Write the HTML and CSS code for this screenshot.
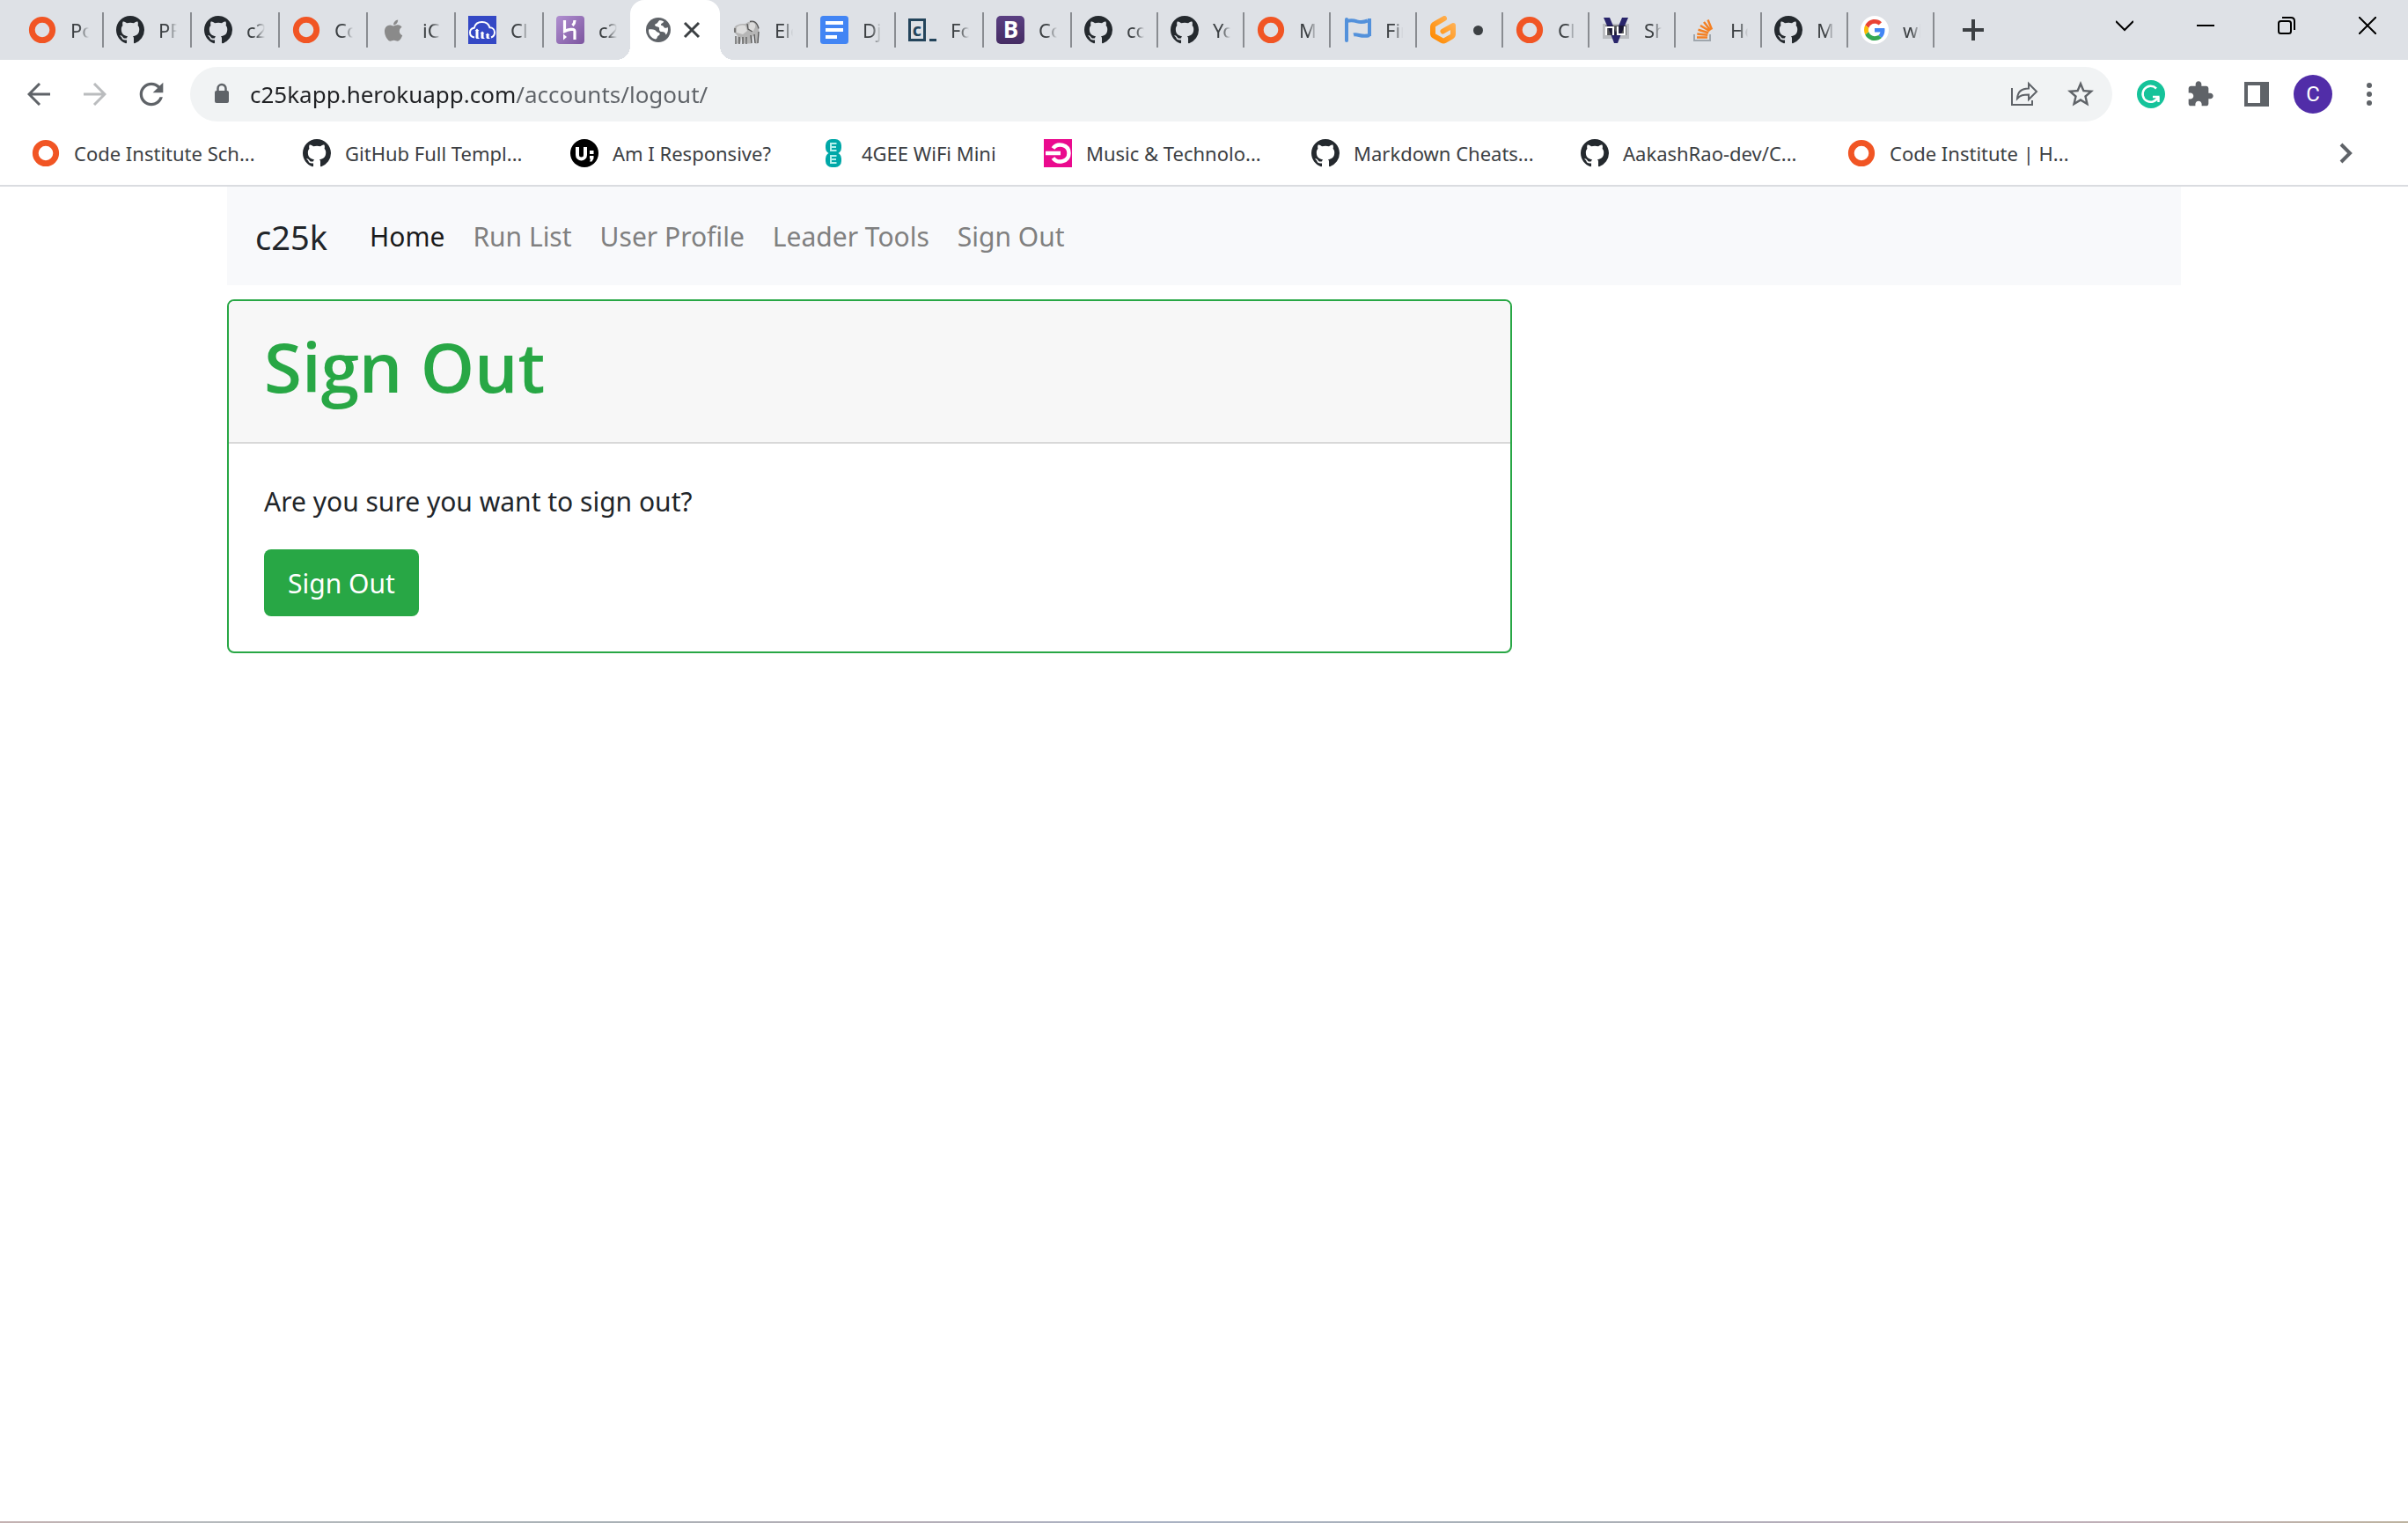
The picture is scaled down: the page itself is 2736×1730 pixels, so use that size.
FILE: index.html
```
<!DOCTYPE html>
<html lang="en">
<head>
<meta charset="utf-8">
<title>c25k</title>
<link rel="stylesheet" href="styles.css">
</head>
<body>
<svg class="sprite" aria-hidden="true">
  <defs>
    <linearGradient id="heroku-fill" x1="0" y1="0" x2="1" y2="1"><stop offset="0" stop-color="#b08fd0"/><stop offset="1" stop-color="#7c559f"/></linearGradient>
    <linearGradient id="gitpod-fill" x1="1" y1="0" x2="0" y2="1"><stop offset="0" stop-color="#ffb45b"/><stop offset="1" stop-color="#ff8a00"/></linearGradient>
    <linearGradient id="bootstrap-fill" x1="0" y1="0" x2="0" y2="1"><stop offset="0" stop-color="#5a3f82"/><stop offset="1" stop-color="#452c63"/></linearGradient>
    <symbol id="ring" viewBox="0 0 32 32"><circle cx="16" cy="16" r="11.700" fill="none" stroke="#f15524" stroke-width="6.800"/></symbol>
    <symbol id="github" viewBox="0 0 16 16"><path fill="#24292e" d="M8 0C3.58 0 0 3.58 0 8c0 3.54 2.29 6.53 5.47 7.59.4.07.55-.17.55-.38 0-.19-.01-.82-.01-1.49-2.01.37-2.53-.49-2.69-.94-.09-.23-.48-.94-.82-1.13-.28-.15-.68-.52-.01-.53.63-.01 1.08.58 1.23.82.72 1.21 1.87.87 2.33.66.07-.52.28-.87.51-1.07-1.78-.2-3.64-.89-3.64-3.95 0-.87.31-1.59.82-2.15-.08-.2-.36-1.02.08-2.12 0 0 .67-.21 2.2.82.64-.18 1.32-.27 2-.27s1.36.09 2 .27c1.53-1.04 2.2-.82 2.2-.82.44 1.1.16 1.92.08 2.12.51.56.82 1.27.82 2.15 0 3.07-1.87 3.75-3.65 3.95.29.25.54.73.54 1.48 0 1.07-.01 1.93-.01 2.2 0 .21.15.46.55.38A8.01 8.01 0 0 0 16 8c0-4.42-3.58-8-8-8z"/></symbol>
    <symbol id="apple" viewBox="-64 -16 512 512"><path fill="#8a8a8a" transform="translate(12 30) scale(.86)" d="M318.7 268.7c-.2-36.7 16.4-64.4 50-84.8-18.8-26.9-47.2-41.7-84.7-44.6-35.5-2.8-74.3 20.7-88.5 20.7-15 0-49.4-19.7-76.4-19.7C63.3 141.2 4 184.8 4 273.5q0 39.3 14.4 81.2c12.8 36.7 59 126.7 107.2 125.2 25.2-.6 43-17.9 75.8-17.9 31.8 0 48.3 17.9 76.4 17.9 48.6-.7 90.4-82.5 102.6-119.3-65.2-30.7-61.7-90-61.7-91.9zm-56.6-164.2c27.3-32.4 24.8-61.9 24-72.5-24.1 1.4-52 16.4-67.9 34.9-17.5 19.8-27.8 44.3-25.6 71.9 26.1 2 49.900-11.400 69.500-34.300z"/></symbol>
    <symbol id="cloud" viewBox="0 0 32 32"><path fill="#3448c5" d="M0 0h32v32H0z"/><path d="M7 24.500C3.500 24 2 21.500 2 19c0-3 2-5 4.800-5.300C7.800 9.300 11.500 7 15.700 7c4 0 7.500 2.300 8.700 6.200 3.300 0 5.600 2.500 5.600 5.600 0 2.700-1.500 4.900-4 5.700" fill="none" stroke="#fff" stroke-width="2"/><path fill="#fff" d="M7.500 17 10 14.500l2.500 2.500h-1v7.500L13 26H9.500L8.500 25v-8zM13.500 20l2.500-2.500 2.500 2.500h-1v4.500L19 26h-3.500l-1-1v-5zM19.500 22l2.500-2.500 2.500 2.500h-1v2.500L25 26h-3.500l-1-1v-3z"/></symbol>
    <symbol id="heroku" viewBox="0 0 32 32"><rect width="32" height="32" rx="4" fill="url(#heroku-fill)"/><path d="M9.500 5v12.500c3-1.500 11.500-4 11.500 0V27M21 5c0 2.500-1 4.500-2.500 6" fill="none" stroke="#fff" stroke-width="3.200"/><path fill="#fff" d="m8 20.500 4 3.500-4 3.500z"/></symbol>
    <symbol id="globe" viewBox="0 0 32 32"><circle cx="16" cy="16" r="14" fill="#5f6368"/><path fill="#fff" d="M5 15.500c2.500-.6 5-.4 7 .4 1.500.8 1.500 2 3 2.500 2 .5 3 1.300 2.600 2.800-.5 1.300-2.600 1.400-2.800 2.800-.1 1-.6 2-1.800 2.600C8 25.600 4.500 21 5 15.500zM17.500 5c2 .2 3.500.8 4.800 1.800-.8 1.400-2.600 1.500-3.300 2.600-.5 1.200.7 1.600 1.800 1.800 1.600.3 1 1.800 2.200 2.400 1.300.6 3 0 3.800-.6.7 3-.2 6.500-2 8.600-.8-.6-.6-2.200-1.800-2.900-1.700-.8-4.200.2-5.500-1.600-1-1.500.2-3.100-1-4.100-1.200-1-3.500-.4-4.300-1.900-.7-1.800 1.800-2.100 2.800-3.100.9-.9.900-2.300 2.500-3z"/></symbol>
    <symbol id="elephant" viewBox="0 0 32 32"><path fill="#b5b5b5" d="M2 14c1-3 5-5 12-5 2 0 3-2 6-2.500 5-.8 9 2.500 10 8 .5 4 .5 11-1 17h-3l-1-9-2 1-1 8h-5l-1-8-1 8h-3l-1-8-2 8H5l1-9c-2-2-5-4-4-8.500z"/><path fill="#dcdcdc" d="M5 13c3-3 7-3 10-2l2 6-5 4-7-2zM20 8c5-1 7 1 6 5l-3 6-5-4z"/><path fill="none" stroke="#555" stroke-width="1.300" d="M3 14v5M4 23v9M8 24v8M12 24v8M16 24v8M21 22l1 9M25 21l1 10M30 18l-1 13M17 9l1 6 5 3M20 6.500c4-1 8 0 10 8"/></symbol>
    <symbol id="docs" viewBox="0 0 32 32"><rect width="32" height="32" rx="3.500" fill="#4285f4"/><path fill="#fff" d="M6 6h20v4H6zM6 14h20v4H6zM6 22h13v4H6z"/></symbol>
    <symbol id="crispy" viewBox="0 0 32 32"><path fill="none" stroke="#23445b" stroke-width="3" d="M1.500 4.500h17v23h-17z"/><path fill="#23445b" d="M24 26h8v3h-8z"/><text x="10" y="23" text-anchor="middle" class="glyph glyph-bold" font-size="20" fill="#23445b">c</text></symbol>
    <symbol id="bootstrap" viewBox="0 0 32 32"><rect width="32" height="32" rx="5" fill="url(#bootstrap-fill)"/><text x="16.500" y="25" text-anchor="middle" class="glyph glyph-bold" font-size="26" fill="#fff">B</text></symbol>
    <symbol id="flag" viewBox="0 0 32 32"><path fill="none" stroke="#5391db" stroke-width="4" stroke-linecap="round" d="M4 4v24"/><path fill="none" stroke="#5391db" stroke-width="4" d="M4 6c5-1.500 8-1 12 .3 4 1.200 7 1 12-.8M30 3v20M12 21.500c5-1.500 9 3.500 18 .5"/></symbol>
    <symbol id="gitpod" viewBox="0 0 32 32"><path fill="none" stroke="url(#gitpod-fill)" stroke-width="6" stroke-linecap="round" stroke-linejoin="round" d="M17 3 6 9.300C4.700 10 4 11 4 12.500v7.700c0 1.300.6 2.100 1.700 2.800l8.500 4.900c1.300.7 2.500.7 3.700 0l7.400-4.300c1.100-.7 1.700-1.500 1.700-2.800V11l-11.500 6.500"/></symbol>
    <symbol id="nu" viewBox="0 0 32 32"><path fill="#777" opacity=".35" d="M1 9h30v17H1z"/><path fill="#29256b" d="M2 2h7l7 17 7-17h7l-9 21-3 8h-4l-3-8z"/><path fill="#111" opacity=".6" d="M4 11h24v11H4z"/><path fill="none" stroke="#fff" stroke-width="2.200" d="M5 22v-9h8v9M18 12v9h8v-9"/></symbol>
    <symbol id="stack" viewBox="0 0 32 32"><path fill="none" stroke="#9fa6ad" stroke-width="2" d="M7 21v7h18v-7"/><path fill="none" stroke="#f48024" stroke-width="2.500" d="M10 24.500h12M10.300 20.500l12 1.300M11.500 15.800l11.600 3.400M14 11l10.500 6.300M18 7l7.500 9.500M22.500 4.500l4.500 11"/></symbol>
    <symbol id="google" viewBox="-8 -8 64 64"><circle cx="24" cy="24" r="32" fill="#fff"/><path fill="#4285f4" d="M46.980 24.550c0-1.570-.15-3.090-.38-4.550H24v9.020h12.940c-.58 2.960-2.260 5.480-4.780 7.180l7.730 6c4.510-4.180 7.090-10.360 7.090-17.650z"/><path fill="#ea4335" d="M24 9.500c3.540 0 6.710 1.220 9.210 3.600l6.850-6.850C35.900 2.380 30.470 0 24 0 14.620 0 6.510 5.380 2.560 13.220l7.980 6.190C12.430 13.720 17.740 9.500 24 9.500z"/><path fill="#fbbc05" d="M10.530 28.590c-.48-1.450-.76-2.990-.76-4.590s.27-3.140.76-4.590l-7.980-6.190C.92 16.460 0 20.120 0 24c0 3.880.92 7.540 2.560 10.780l7.970-6.190z"/><path fill="#34a853" d="M24 48c6.480 0 11.930-2.130 15.890-5.810l-7.730-6c-2.150 1.450-4.920 2.300-8.160 2.300-6.260 0-11.570-4.220-13.470-9.910l-7.980 6.190C6.510 42.620 14.620 48 24 48z"/></symbol>
    <symbol id="responsive" viewBox="0 0 32 32"><circle cx="16" cy="16" r="16"/><path fill="none" stroke="#fff" stroke-width="4" d="M8 9v9c0 6 9 6 9 0V9"/><path fill="#fff" d="M22 13h4.500v4H22zM22 19h4.500v3l-2 3.500H22l1-3h-1z"/></symbol>
    <symbol id="ee" viewBox="0 0 32 32"><rect x="7" y="0" width="18" height="17" rx="7" fill="#00a8a8"/><rect x="7" y="15" width="18" height="17" rx="7" fill="#00a8a8"/><path fill="none" stroke="#b5f0ec" stroke-width="2" d="M19.500 5H13v8h6.500M13 9h6M19.500 19H13v8h6.500M13 23h6"/></symbol>
    <symbol id="music" viewBox="0 0 32 32"><path fill="#ea0a8e" d="M0 0h32v32H0z"/><path fill="none" stroke="#fff" stroke-width="4.500" d="M10.500 10.500c5-7 18-4.500 18 5.500s-13 12.500-18 5.500M2 16h17"/></symbol>
  </defs>
</svg>

<header class="browser">
  <div class="tab-strip">
    <nav class="tabs" aria-label="Open tabs">
      <button class="tab"><svg class="icon"><use href="#ring"/></svg><span class="tab-title">Po</span></button>
      <button class="tab"><svg class="icon"><use href="#github"/></svg><span class="tab-title">PF</span></button>
      <button class="tab"><svg class="icon"><use href="#github"/></svg><span class="tab-title">c2</span></button>
      <button class="tab"><svg class="icon"><use href="#ring"/></svg><span class="tab-title">Co</span></button>
      <button class="tab"><svg class="icon"><use href="#apple"/></svg><span class="tab-title">iC</span></button>
      <button class="tab"><svg class="icon"><use href="#cloud"/></svg><span class="tab-title">Cl</span></button>
      <button class="tab tab-plain"><svg class="icon"><use href="#heroku"/></svg><span class="tab-title">c2</span></button>
      <div class="tab tab-plain tab-active"><svg class="icon"><use href="#globe"/></svg><button class="tab-close" aria-label="Close tab"><svg width="20" height="20" viewBox="0 0 20 20"><path d="m2 2 16 16M18 2 2 18" fill="none" stroke="#3c4043" stroke-width="3"/></svg></button></div>
      <button class="tab"><svg class="icon"><use href="#elephant"/></svg><span class="tab-title">Ele</span></button>
      <button class="tab"><svg class="icon"><use href="#docs"/></svg><span class="tab-title">Dj</span></button>
      <button class="tab"><svg class="icon"><use href="#crispy"/></svg><span class="tab-title">Fo</span></button>
      <button class="tab"><svg class="icon"><use href="#bootstrap"/></svg><span class="tab-title">Co</span></button>
      <button class="tab tab-narrow"><svg class="icon"><use href="#github"/></svg><span class="tab-title">co</span></button>
      <button class="tab tab-narrow"><svg class="icon"><use href="#github"/></svg><span class="tab-title">Yo</span></button>
      <button class="tab tab-narrow"><svg class="icon"><use href="#ring"/></svg><span class="tab-title">M</span></button>
      <button class="tab tab-narrow"><svg class="icon"><use href="#flag"/></svg><span class="tab-title">Fin</span></button>
      <button class="tab tab-narrow" aria-label="Gitpod"><svg class="icon"><use href="#gitpod"/></svg><span class="tab-dot"></span></button>
      <button class="tab tab-narrow"><svg class="icon"><use href="#ring"/></svg><span class="tab-title">Cl</span></button>
      <button class="tab tab-narrow"><svg class="icon"><use href="#nu"/></svg><span class="tab-title">Sh</span></button>
      <button class="tab tab-narrow"><svg class="icon"><use href="#stack"/></svg><span class="tab-title">Ho</span></button>
      <button class="tab tab-narrow"><svg class="icon"><use href="#github"/></svg><span class="tab-title">M</span></button>
      <button class="tab tab-narrow"><svg class="icon"><use href="#google"/></svg><span class="tab-title">wh</span></button>
    </nav>
    <button class="new-tab" aria-label="New tab"><svg width="24" height="24" viewBox="0 0 24 24"><path d="M12 0v24M0 12h24" stroke="#3c4043" stroke-width="4"/></svg></button>
    <div class="window-controls">
      <button aria-label="Search tabs"><svg width="20" height="20" viewBox="0 0 20 20"><path d="m0 5 10 10L20 5" fill="none" stroke="#000" stroke-width="2"/></svg></button>
      <button aria-label="Minimise"><svg width="20" height="20" viewBox="0 0 20 20"><path d="M0 10h20" stroke="#000" stroke-width="2"/></svg></button>
      <button aria-label="Restore"><svg width="20" height="20" viewBox="0 0 20 20"><rect x="1" y="5" width="14" height="14" rx="2.500" fill="none" stroke="#000" stroke-width="2"/><path d="M5 1h10c2.500 0 4 1.500 4 4v10" fill="none" stroke="#000" stroke-width="2"/></svg></button>
      <button aria-label="Close"><svg width="20" height="20" viewBox="0 0 20 20"><path d="m0 0 20 20M20 0 0 20" stroke="#000" stroke-width="2"/></svg></button>
    </div>
  </div>

  <div class="toolbar">
    <button class="tool tool-wide" aria-label="Back"><svg width="26" height="26" viewBox="0 0 26 26"><path d="M26 13H3M14 1 2 13l12 12" fill="none" stroke="#5f6368" stroke-width="3"/></svg></button>
    <button class="tool tool-wide" aria-label="Forward"><svg width="26" height="26" viewBox="0 0 26 26"><path d="M0 13h23M12 1l12 12-12 12" fill="none" stroke="#babcbe" stroke-width="3"/></svg></button>
    <button class="tool tool-wide" aria-label="Reload"><svg width="40" height="40" viewBox="0 0 24 24"><path fill="#5f6368" d="M17.650 6.350C16.200 4.900 14.210 4 12 4c-4.420 0-7.990 3.580-7.990 8s3.570 8 7.990 8c3.730 0 6.840-2.550 7.730-6h-2.080c-.82 2.330-3.040 4-5.650 4-3.310 0-6-2.690-6-6s2.690-6 6-6c1.660 0 3.140.69 4.220 1.780L13 11h7V4l-2.350 2.350z"/></svg></button>
    <div class="omnibox">
      <svg class="icon" viewBox="0 0 32 32"><path fill="none" stroke="#5f6368" stroke-width="2.500" d="M11.500 13V9.500a4.500 4.500 0 0 1 9 0V13"/><rect x="8" y="12" width="16" height="14" rx="2" fill="#5f6368"/></svg>
      <input class="address" type="text" aria-label="Address" value="c25kapp.herokuapp.com/accounts/logout/">
      <button class="tool tool-wide" aria-label="Share"><svg width="32" height="32" viewBox="0 0 32 32" fill="none" stroke="#5f6368" stroke-width="2"><path d="M2 9v19h23v-5"/><path d="M8 21c.5-8 5-11.500 13-11.500V4l9 9-9 9v-5.500c-6 0-9.500.5-13 4.500z"/></svg></button>
      <button class="tool tool-wide" aria-label="Bookmark this tab"><svg width="36" height="36" viewBox="0 0 24 24"><path fill="#5f6368" d="M22 9.240l-7.190-.62L12 2 9.190 8.630 2 9.240l5.460 4.730L5.820 21 12 17.270 18.180 21l-1.630-7.030L22 9.240zM12 15.400l-3.760 2.270 1-4.280-3.320-2.880 4.380-.38L12 6.100l1.710 4.040 4.380.38-3.320 2.880 1 4.280L12 15.400z"/></svg></button>
    </div>
    <div class="extensions">
      <button class="tool" aria-label="Grammarly"><svg class="icon" viewBox="0 0 32 32"><circle cx="16" cy="16" r="16" fill="#15c39a"/><path d="M22 9.500A9 9 0 1 0 24 19h-6M24.500 25v-6" fill="none" stroke="#fff" stroke-width="2.500"/></svg></button>
      <button class="tool" aria-label="Extensions"><svg width="32" height="32" viewBox="0 0 24 24"><path fill="#5f6368" d="M20.500 11H19V7c0-1.100-.9-2-2-2h-4V3.500C13 2.120 11.880 1 10.500 1S8 2.120 8 3.500V5H4c-1.100 0-1.990.9-1.990 2v3.800H3.500c1.490 0 2.700 1.210 2.700 2.700s-1.210 2.700-2.700 2.700H2V20c0 1.100.9 2 2 2h3.800v-1.500c0-1.490 1.210-2.700 2.700-2.700 1.490 0 2.700 1.210 2.700 2.700V22H17c1.100 0 2-.9 2-2v-4h1.500c1.380 0 2.500-1.120 2.500-2.500S21.880 11 20.500 11z"/></svg></button>
      <button class="tool tool-panel" aria-label="Side panel"><svg width="28" height="28" viewBox="0 0 28 28"><path fill="#5f6368" fill-rule="evenodd" d="M0 0h28v28H0zM4 4v20h14V4z"/></svg></button>
      <button class="tool" aria-label="Profile"><span class="avatar">C</span></button>
      <button class="tool tool-panel" aria-label="Menu"><svg width="8" height="28" viewBox="0 0 8 28" fill="#5f6368"><circle cx="4" cy="4" r="3"/><circle cx="4" cy="14" r="3"/><circle cx="4" cy="24" r="3"/></svg></button>
    </div>
  </div>

  <nav class="bookmarks" aria-label="Bookmarks">
    <a href="#"><svg class="icon"><use href="#ring"/></svg>Code Institute Sch...</a>
    <a href="#"><svg class="icon"><use href="#github"/></svg>GitHub Full Templ...</a>
    <a href="#"><svg class="icon"><use href="#responsive"/></svg>Am I Responsive?</a>
    <a href="#"><svg class="icon"><use href="#ee"/></svg>4GEE WiFi Mini</a>
    <a href="#"><svg class="icon"><use href="#music"/></svg>Music &amp; Technolo...</a>
    <a href="#"><svg class="icon"><use href="#github"/></svg>Markdown Cheats...</a>
    <a href="#"><svg class="icon"><use href="#github"/></svg>AakashRao-dev/C...</a>
    <a href="#"><svg class="icon"><use href="#ring"/></svg>Code Institute | H...</a>
    <button class="more" aria-label="More bookmarks"><svg width="16" height="24" viewBox="0 0 16 24"><path d="m2 2 10 10L2 22" fill="none" stroke="#5f6368" stroke-width="4"/></svg></button>
  </nav>
</header>

<main class="container">
  <nav class="navbar">
    <a class="brand" href="#">c25k</a>
    <a class="nav-link nav-current" href="#">Home</a>
    <a class="nav-link" href="#">Run List</a>
    <a class="nav-link" href="#">User Profile</a>
    <a class="nav-link" href="#">Leader Tools</a>
    <a class="nav-link" href="#">Sign Out</a>
  </nav>
  <section class="card">
    <h1 class="card-header">Sign Out</h1>
    <form class="card-body">
      <p>Are you sure you want to sign out?</p>
      <button class="submit" type="button">Sign Out</button>
    </form>
  </section>
</main>
<footer class="screen-edge"></footer>
</body>
</html>
```
FILE: styles.css
```
* {
  box-sizing: border-box;
}

body {
  display: flex;
  flex-direction: column;
  min-height: 100vh;
  margin: 0;
  background: #fff;
  color: #212529;
  font-family: "Noto Sans", "Open Sans", sans-serif;
  font-size: 30px;
  line-height: 48px;
}

button {
  padding: 0;
  border: 0;
  background: none;
  color: inherit;
  font: inherit;
}

a {
  color: inherit;
  text-decoration: none;
}

svg {
  display: block;
  flex: none;
}

.sprite {
  position: absolute;
  width: 0;
  height: 0;
}

.icon {
  width: 32px;
  height: 32px;
}

.glyph {
  font-family: "Open Sans", sans-serif;
}

.glyph-bold {
  font-weight: 700;
}

/* Browser frame */

.browser {
  border-bottom: 2px solid #dadce0;
  color: #3c4043;
  font-size: 22px;
  line-height: 32px;
}

.tab-strip {
  display: flex;
  height: 68px;
  padding-left: 18px;
  background: #dee1e6;
}

.tabs {
  display: flex;
}

.tab {
  display: flex;
  align-items: center;
  width: 100px;
  padding-left: 14px;
  gap: 16px;
}

.tab-narrow {
  width: 98px;
}

.tab::after {
  content: "";
  width: 2px;
  height: 40px;
  margin-left: auto;
  background: #898c91;
}

.tab-title {
  width: 21px;
  overflow: hidden;
  white-space: nowrap;
  text-align: left;
  -webkit-mask-image: linear-gradient(90deg, #000 10px, transparent);
  mask-image: linear-gradient(90deg, #000 10px, transparent);
}

.tab-narrow,
.tab:not(.tab-active) {
  gap: 16px;
}

.tab::after {
  flex: none;
}

.tab:not(.tab-active)::after {
  margin-left: -2px;
}

.tab-title,
.tab-dot {
  margin-right: auto;
}

.tab-dot {
  width: 11px;
  height: 11px;
  margin-left: 2px;
  border-radius: 50%;
  background: #3c4043;
}

.tab-plain::after {
  display: none;
}

.tab-active {
  position: relative;
  width: 102px;
  margin-left: -2px;
  padding-left: 16px;
  gap: 12px;
  border-radius: 16px 16px 0 0;
  background: #fff;
}

.tab-active::before,
.tab-active::after {
  content: "";
  display: block;
  position: absolute;
  bottom: 0;
  width: 16px;
  height: 16px;
  margin: 0;
}

.tab-active::before {
  right: 100%;
  background: radial-gradient(circle at 0 0, transparent 16px, #fff 16px);
}

.tab-active::after {
  left: 100%;
  background: radial-gradient(circle at 100% 0, transparent 16px, #fff 16px);
}

.new-tab {
  display: flex;
  align-items: center;
  margin-left: 32px;
}

.window-controls {
  display: flex;
  height: 58px;
  margin-left: auto;
}

.window-controls button {
  display: grid;
  place-items: center;
  width: 92px;
}

.toolbar {
  display: flex;
  align-items: center;
  padding: 8px 8px 8px 12px;
}

.tool {
  display: grid;
  place-items: center;
  width: 56px;
}

.tool-wide {
  width: 64px;
}

.tool-panel {
  width: 72px;
}

.omnibox {
  display: flex;
  flex: 1;
  align-items: center;
  height: 62px;
  margin-left: 12px;
  padding: 0 4px 0 20px;
  border-radius: 31px;
  background: #f1f3f4;
}

/* The host is darker than the path that follows it. */
.address {
  flex: 1;
  min-width: 0;
  height: 40px;
  margin-left: 16px;
  padding: 0;
  border: 0;
  outline: 0;
  background: linear-gradient(90deg, #202124 302px, #5f6368 302px);
  -webkit-background-clip: text;
  background-clip: text;
  color: transparent;
  font: inherit;
  font-size: 26px;
}

.extensions {
  display: flex;
  align-items: center;
  margin-left: 16px;
}

.avatar {
  width: 44px;
  height: 44px;
  border-radius: 50%;
  background: #512da8;
  color: #fff;
  font-family: Roboto, sans-serif;
  font-size: 24px;
  line-height: 44px;
}

.bookmarks {
  display: grid;
  grid-template-columns: 308px 304px 283px 255px 304px 306px 303px 1fr auto;
  align-items: center;
  height: 64px;
  padding: 0 62px 8px 36px;
}

.bookmarks a {
  display: flex;
  align-items: center;
  gap: 16px;
  white-space: nowrap;
}

/* Page */

.container {
  flex: 1;
  width: 100%;
  max-width: 2280px;
  margin: 0 auto;
  padding: 0 30px;
}

.navbar {
  display: flex;
  align-items: center;
  height: 112px;
  padding: 2px 32px 0;
  background: #f8f9fb;
}

.brand {
  margin-right: 32px;
  color: #212529;
  font-size: 38px;
}

.nav-link {
  padding: 0 16px;
  color: #808080;
}

.nav-current {
  color: #1a1a1a;
}

.card {
  width: calc(66.6667% - 20px);
  margin-top: 16px;
  border: 2px solid #28a745;
  border-radius: 8px;
  overflow: hidden;
}

.card-header {
  margin: 0;
  padding: 26px 40px 38px;
  border-bottom: 2px solid #d8d8d8;
  background: #f7f7f7;
  color: #28a745;
  font-family: "Open Sans", sans-serif;
  font-size: 78px;
  font-weight: 600;
  line-height: 96px;
}

.card-body {
  padding: 42px 40px 40px;
}

.card-body p {
  margin: 0 0 30px;
}

.submit {
  display: block;
  height: 76px;
  padding: 2px 27px 0;
  border-radius: 8px;
  background: #28a745;
  color: #fff;
}

.screen-edge {
  height: 2px;
  background: linear-gradient(90deg, #c4b1b1, #b6babd 8%, #a9b1b6 25%, #b6aeb6 37%, #aab2c4 47%, #a9b1b6 65%, #b6aebb 75%, #c0b0b8 88%, #bdb3a0);
}
```
